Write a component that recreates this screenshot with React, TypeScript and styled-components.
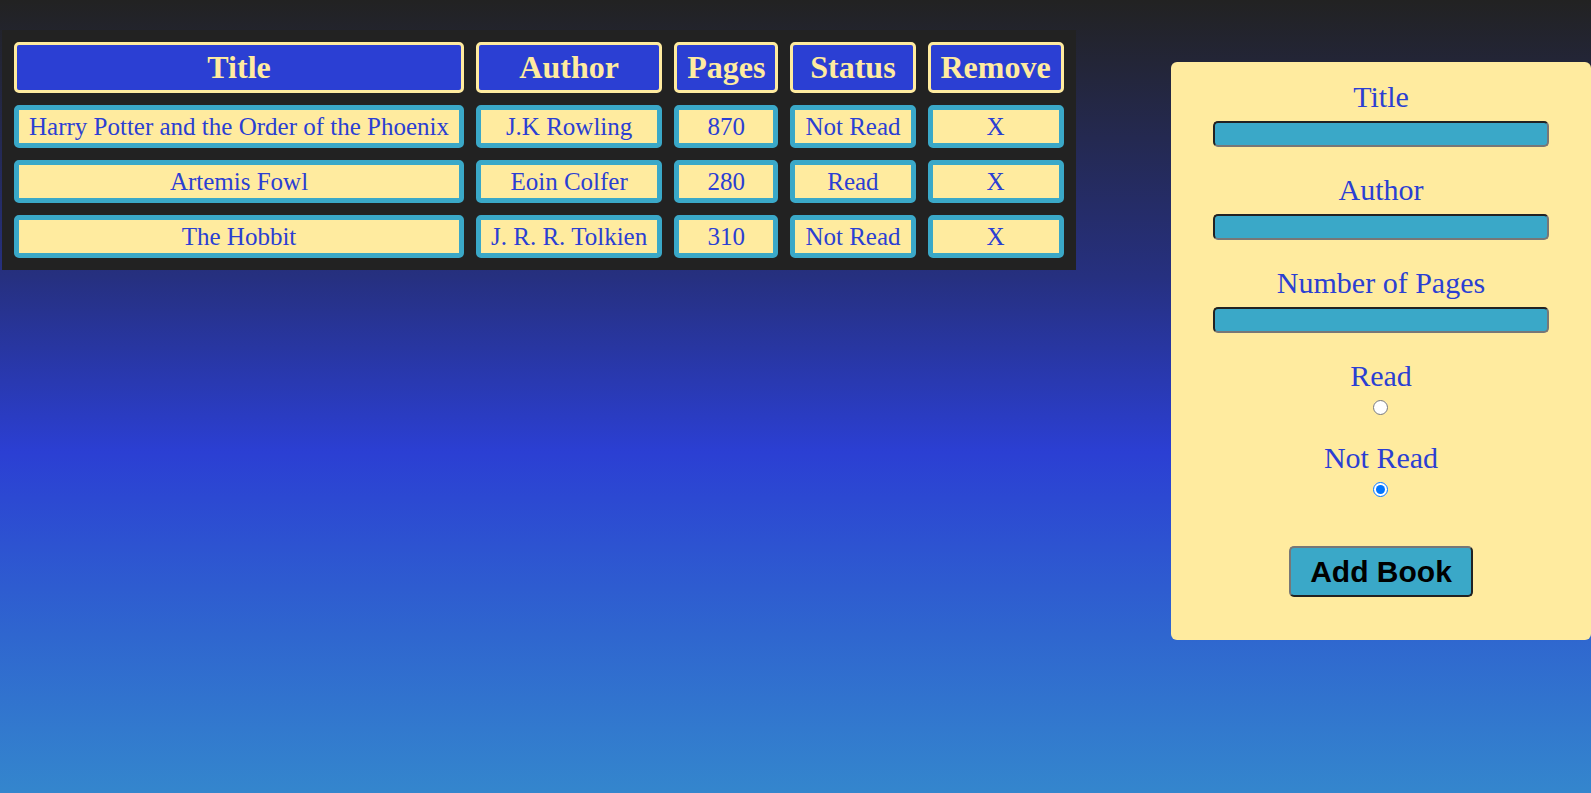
import styled, { createGlobalStyle } from 'styled-components'

const CREAM = '#ffeb9f'
const BLUE = '#2b3fd3'
const TEAL = '#3aa8c8'
const DARK = '#222222'

const GlobalStyle = createGlobalStyle`
    html, body {
        margin: 0;
        padding: 0;
    }
    body {
        min-height: 100vh;
        background: linear-gradient(180deg, ${DARK} 0%, #263080 35%, ${BLUE} 57%, #2f66cf 80%, #3486cd 100%);
        font-family: "Liberation Serif", "Times New Roman", serif;
    }
`

const Page = styled.div`
    display: flex;
    justify-content: space-between;
    align-items: flex-start;
    padding: 30px 0 0 2px;
`

const LibraryTable = styled.table`
    background-color: ${DARK};
    border-collapse: separate;
    border-spacing: 12px;
`

const HeadCell = styled.th`
    background-color: ${BLUE};
    color: ${CREAM};
    border: 3px solid ${CREAM};
    border-radius: 5px;
    font-size: 32px;
    font-weight: 700;
    line-height: 37px;
    padding: 4px 10px;
    text-align: center;
    white-space: nowrap;
`

const BodyCell = styled.td`
    background-color: ${CREAM};
    color: ${BLUE};
    border: 5px solid ${TEAL};
    border-radius: 5px;
    font-size: 25px;
    line-height: 31px;
    padding: 1px 10px;
    text-align: center;
    white-space: nowrap;
`

const FormPanel = styled.form`
    margin-top: 32px;
    width: 420px;
    box-sizing: border-box;
    padding: 18px 0 43px;
    background-color: ${CREAM};
    border-radius: 6px;
    display: flex;
    flex-direction: column;
    align-items: center;
`

const Field = styled.div<{ $gap?: number }>`
    display: flex;
    flex-direction: column;
    align-items: center;
    margin-bottom: ${props => props.$gap ?? 26}px;
`

const FieldLabel = styled.label`
    color: ${BLUE};
    font-size: 30px;
    line-height: 34px;
    margin-bottom: 7px;
`

const TextInput = styled.input`
    box-sizing: border-box;
    width: 336px;
    height: 26px;
    background-color: ${TEAL};
    border: 2px solid;
    border-color: #222 #777 #777 #222;
    border-radius: 5px;
    padding: 0 6px;
    outline: none;
`

const Radio = styled.input`
    width: 15px;
    height: 15px;
    margin: 0;
`

const AddButton = styled.button`
    background-color: ${TEAL};
    color: #000;
    font-family: "Liberation Sans", Arial, sans-serif;
    font-weight: 700;
    font-size: 30px;
    line-height: 35px;
    padding: 6px 19px;
    border: 2px solid;
    border-color: #777 #222 #222 #777;
    border-radius: 5px;
    cursor: pointer;
`

const books = [
    { title: 'Harry Potter and the Order of the Phoenix', author: 'J.K Rowling', pages: 870, read: false },
    { title: 'Artemis Fowl', author: 'Eoin Colfer', pages: 280, read: true },
    { title: 'The Hobbit', author: 'J. R. R. Tolkien', pages: 310, read: false },
]

const Library = () => {
    return (
        <LibraryTable>
            <thead>
                <tr>
                    <HeadCell>Title</HeadCell>
                    <HeadCell>Author</HeadCell>
                    <HeadCell>Pages</HeadCell>
                    <HeadCell>Status</HeadCell>
                    <HeadCell>Remove</HeadCell>
                </tr>
            </thead>
            <tbody>
                {books.map(book => (
                    <tr key={book.title}>
                        <BodyCell>{book.title}</BodyCell>
                        <BodyCell>{book.author}</BodyCell>
                        <BodyCell>{book.pages}</BodyCell>
                        <BodyCell>{book.read ? 'Read' : 'Not Read'}</BodyCell>
                        <BodyCell>X</BodyCell>
                    </tr>
                ))}
            </tbody>
        </LibraryTable>
    )
}

const BookForm = () => {
    return (
        <FormPanel onSubmit={e => e.preventDefault()}>
            <Field>
                <FieldLabel htmlFor="title">Title</FieldLabel>
                <TextInput id="title" type="text" />
            </Field>
            <Field>
                <FieldLabel htmlFor="author">Author</FieldLabel>
                <TextInput id="author" type="text" />
            </Field>
            <Field>
                <FieldLabel htmlFor="pages">Number of Pages</FieldLabel>
                <TextInput id="pages" type="number" />
            </Field>
            <Field $gap={26}>
                <FieldLabel htmlFor="read">Read</FieldLabel>
                <Radio id="read" type="radio" name="status" />
            </Field>
            <Field $gap={49}>
                <FieldLabel htmlFor="notread">Not Read</FieldLabel>
                <Radio id="notread" type="radio" name="status" defaultChecked />
            </Field>
            <AddButton type="submit">Add Book</AddButton>
        </FormPanel>
    )
}

export default function App() {
    return (
        <>
            <GlobalStyle />
            <Page>
                <Library />
                <BookForm />
            </Page>
        </>
    )
}
